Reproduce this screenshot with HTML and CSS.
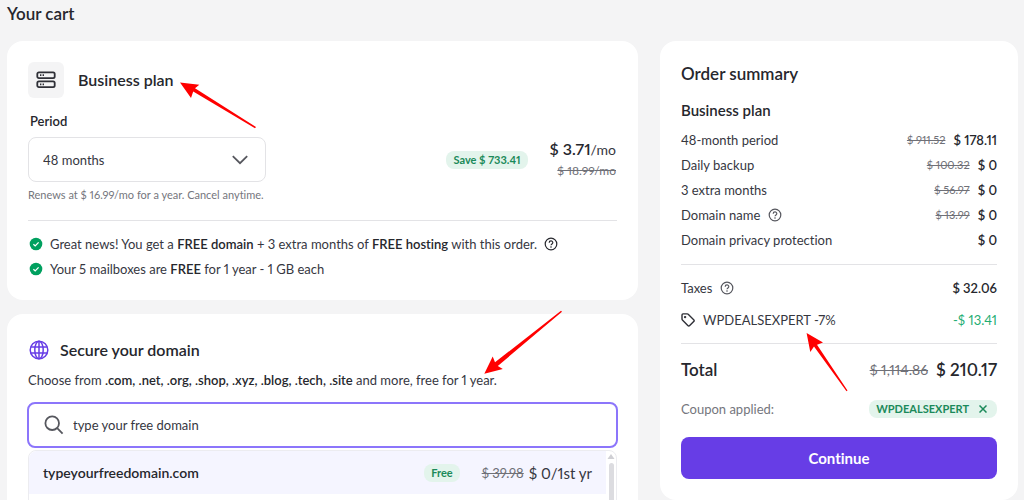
FILE: index.html
```html
<!DOCTYPE html>
<html lang="en">
<head>
    <meta charset="UTF-8">
    <meta name="viewport" content="width=device-width, initial-scale=1.0">
    <title>Your cart</title>
    <link rel="stylesheet" href="styles.css">
</head>
<body>

<!-- shared icons -->
<svg class="sprite" aria-hidden="true">
    <symbol id="icon-check" viewBox="0 0 14 14">
        <circle cx="7" cy="7" r="6.3" fill="#00a05f"/>
        <path d="M4.4 7.2l1.8 1.7 3.4-3.5" fill="none" stroke="#fff" stroke-width="1.3"/>
    </symbol>
    <symbol id="icon-help" viewBox="0 0 14 14">
        <g fill="none" stroke="currentColor" stroke-width="1.2">
            <circle cx="7" cy="7" r="5.8"/>
            <path d="M5.2 5.7c0-2.3 3.6-2.3 3.6-.1 0 1.3-1.7 1.3-1.8 2.7"/>
        </g>
        <circle cx="7" cy="10" r=".8" fill="currentColor"/>
    </symbol>
</svg>

<div class="page">
    <h1>Your cart</h1>

    <div class="cart">
        <main class="column">
            <section class="card plan">
                <div class="plan-header">
                    <span class="plan-icon">
                        <svg width="20" height="18" viewBox="0 0 20 18" fill="none" stroke="#2f3037" stroke-width="1.8">
                            <rect x="1.3" y="1.3" width="17.4" height="5.8" rx="1.6"/>
                            <rect x="1.3" y="10.4" width="17.4" height="5.8" rx="1.6"/>
                            <path d="M4 4.2h1.4M6.6 4.2h1.4M4 13.3h1.4M6.6 13.3h1.4"/>
                        </svg>
                    </span>
                    <h2>Business plan</h2>
                </div>

                <label class="period-label" for="period">Period</label>
                <div class="period-row">
                    <div class="select-box">
                        <select id="period">
                            <option>48 months</option>
                            <option>24 months</option>
                            <option>12 months</option>
                            <option>1 month</option>
                        </select>
                        <svg class="chevron" width="16" height="10" viewBox="0 0 16 10" fill="none" stroke="#56575e" stroke-width="1.8">
                            <path d="M.8 1.2L8 8.2l7.2-7"/>
                        </svg>
                    </div>
                    <span class="badge">Save $ 733.41</span>
                    <div class="price">
                        <div class="price-now"><strong>$ 3.71</strong>/mo</div>
                        <s class="price-old">$ 18.99<small>/mo</small></s>
                    </div>
                </div>
                <p class="renewal">Renews at $ 16.99/mo for a year. Cancel anytime.</p>

                <ul class="perks">
                    <li>
                        <svg width="14" height="14"><use href="#icon-check"/></svg>
                        <span>Great news! You get a <b>FREE domain</b> + 3 extra months of <b>FREE hosting</b> with this order.</span>
                        <svg class="help dark" width="14" height="14"><use href="#icon-help"/></svg>
                    </li>
                    <li>
                        <svg width="14" height="14"><use href="#icon-check"/></svg>
                        <span>Your 5 mailboxes are <b>FREE</b> for 1 year - 1 GB each</span>
                    </li>
                </ul>
            </section>

            <section class="card domain">
                <div class="domain-header">
                    <svg width="20" height="20" viewBox="0 0 20 20" fill="none" stroke="#673de6" stroke-width="1.5">
                        <circle cx="10" cy="10" r="8.8"/>
                        <ellipse cx="10" cy="10" rx="4.2" ry="8.8"/>
                        <path d="M10 1v18M1.8 7h16.4M1.8 13h16.4"/>
                    </svg>
                    <h2>Secure your domain</h2>
                </div>
                <p class="domain-text">Choose from <b>.com, .net, .org, .shop, .xyz, .blog, .tech, .site</b> and more, free for 1 year.</p>

                <div class="search">
                    <svg width="20" height="20" viewBox="0 0 20 20" fill="none" stroke="#56575e" stroke-width="1.8">
                        <circle cx="8.2" cy="8.2" r="6.8"/>
                        <path d="M13.2 13.2l5.4 5.4"/>
                    </svg>
                    <input type="text" aria-label="Domain name" value="type your free domain">
                </div>
                <div class="results">
                    <div class="results-list">
                        <div class="result active">
                            <b>typeyourfreedomain.com</b>
                            <span class="badge">Free</span>
                            <s>$ 39.98</s>
                            <span class="result-price">$ 0/1st yr</span>
                        </div>
                        <div class="result"></div>
                    </div>
                    <div class="scrollbar">
                        <svg width="8" height="5" viewBox="0 0 8 5" fill="#cfcfd4"><path d="M4 0l3.5 5h-7z"/></svg>
                        <span class="thumb"></span>
                    </div>
                </div>
            </section>
        </main>

        <aside class="card summary">
            <h2>Order summary</h2>
            <h3>Business plan</h3>
            <ul class="lines">
                <li>48-month period <span class="amount"><s>$ 911.52</s> <b>$ 178.11</b></span></li>
                <li>Daily backup <span class="amount"><s>$ 100.32</s> <b>$ 0</b></span></li>
                <li>3 extra months <span class="amount"><s>$ 56.97</s> <b>$ 0</b></span></li>
                <li>Domain name <svg class="help" width="14" height="14"><use href="#icon-help"/></svg> <span class="amount"><s>$ 13.99</s> <b>$ 0</b></span></li>
                <li>Domain privacy protection <span class="amount"><b>$ 0</b></span></li>
            </ul>
            <ul class="lines extras">
                <li>Taxes <svg class="help" width="14" height="14"><use href="#icon-help"/></svg> <span class="amount"><b>$ 32.06</b></span></li>
                <li>
                    <svg width="14" height="14" viewBox="0 0 14 14" fill="none" stroke="#2f3037" stroke-width="1.4">
                        <path d="M1 1.9v4.2c0 .4.1.7.4 1l5.4 5.5c.6.6 1.3.6 1.9 0l4-4c.6-.6.6-1.3 0-1.9L7.2 1.3C6.9 1 6.6.9 6.2.9H2C1.4.9 1 1.3 1 1.9z"/>
                        <circle cx="4.1" cy="4.1" r=".5" fill="#2f3037"/>
                    </svg>
                    <span>WPDEALSEXPERT -7%</span>
                    <span class="amount discount">-$ 13.41</span>
                </li>
            </ul>
            <div class="total">
                <strong>Total</strong>
                <s>$ 1,114.86</s>
                <strong>$ 210.17</strong>
            </div>
            <div class="coupon">
                Coupon applied:
                <span class="badge">WPDEALSEXPERT
                    <button type="button" class="remove" aria-label="Remove coupon">
                        <svg width="8" height="8" viewBox="0 0 8 8" stroke="currentColor" stroke-width="1.5"><path d="M.5.5l7 7M7.5.5l-7 7"/></svg>
                    </button>
                </span>
            </div>
            <button type="button" class="continue">Continue</button>
        </aside>
    </div>

    <!-- red pointers drawn over the cards -->
    <svg class="pointers" width="1024" height="500" viewBox="0 0 1024 500" fill="#f00" aria-hidden="true">
        <path d="M180 82.5L199.3 84.7 195 88.3 256 127 255 128.3 193.2 91.5 191 98z"/>
        <path d="M484.3 373.7L492.7 356.5 495 362.3 561 310.7 562 311.7 497.8 366 502.8 369z"/>
        <path d="M806.6 333L823 342.6 817 344.8 847.5 390.5 846.5 391.3 814 346.5 810.3 352z"/>
    </svg>
</div>

</body>
</html>
```

FILE: styles.css
```css
* {
    box-sizing: border-box;
}
body {
    margin: 0;
    background: #f4f4f5;
    color: #36373f;
    font-family: Lato, "Open Sans", sans-serif;
    font-size: 13px;
    font-variant-ligatures: none;
    font-variant-numeric: proportional-nums;
    line-height: 20px;
}
h1, h2, h3, p, ul {
    margin: 0;
    padding: 0;
}
h1, h2, h3, b, strong {
    color: #26272d;
    font-weight: 600;
}
h1 {
    font-size: 17px;
    line-height: 27px;
    margin-bottom: 14px;
}
h2 {
    font-size: 16px;
}
ul {
    list-style: none;
}
svg {
    flex: none;
}
s {
    color: #6f7077;
}
.sprite {
    display: none;
}
.page {
    position: relative;
    padding: 0 6px 0 7px;
}
.cart {
    display: grid;
    grid-template-columns: 631fr 358fr;
    gap: 22px;
    align-items: start;
}
.column {
    display: flex;
    flex-direction: column;
    gap: 14px;
}
.card {
    background: #fff;
    border-radius: 16px;
    padding: 21px;
}

/* plan */
.plan-header {
    display: flex;
    align-items: center;
    gap: 14px;
}
.plan-icon {
    display: flex;
    align-items: center;
    justify-content: center;
    width: 36px;
    height: 36px;
    border-radius: 6px;
    background: #f4f4f5;
}
.period-label {
    display: block;
    margin: 13px 0 6px 2px;
    color: #26272d;
    font-weight: 600;
}
.period-row {
    display: flex;
    align-items: center;
}
.select-box {
    position: relative;
    width: 238px;
    margin-right: auto;
}
select {
    width: 100%;
    height: 45px;
    padding: 0 14px;
    appearance: none;
    background: #fff;
    border: 1px solid #e3e3e6;
    border-radius: 8px;
    color: #36373f;
    font: inherit;
    font-variant-numeric: inherit;
}
.chevron {
    position: absolute;
    right: 18px;
    top: 18px;
    pointer-events: none;
}
.badge {
    padding: 0 7px;
    border-radius: 8px;
    background: #e3f4ec;
    color: #1b8a5a;
    font-size: 11px;
    font-weight: 700;
    line-height: 18px;
}
.price {
    margin: 0 1px 0 22px;
    text-align: right;
}
.price-now {
    font-size: 14px;
    line-height: 22px;
}
.price-now strong {
    font-size: 16px;
}
.price-old {
    display: block;
    font-size: 12px;
}
.price-old small {
    font-size: 12px;
}
.renewal {
    margin-top: 3px;
    color: #75767d;
    font-size: 11px;
}
.perks {
    display: grid;
    gap: 5px;
    margin-top: 15px;
    padding-top: 13px;
    border-top: 1px solid #e3e3e6;
}
.perks li {
    display: flex;
    align-items: center;
    gap: 7px;
    padding-left: 1px;
}
.help {
    color: #56575e;
}
.help.dark {
    color: #26272d;
}

/* domain */
.domain {
    padding: 26px 20px 22px;
}
.domain-header {
    display: flex;
    align-items: center;
    gap: 11px;
    padding-left: 2px;
}
.domain-text {
    margin: 10px 1px 12px;
}
.search {
    display: flex;
    align-items: center;
    gap: 8px;
    height: 46px;
    padding: 0 15px;
    border: 2px solid #8c75fb;
    border-radius: 8px;
}
.search input {
    flex: 1;
    min-width: 0;
    padding: 0 0 0 1px;
    border: 0;
    outline: 0;
    background: none;
    color: #36373f;
    font: inherit;
}
.results {
    display: flex;
    margin: 2px 1px 0;
    border: 1px solid #ececf0;
    border-radius: 8px;
}
.results-list {
    flex: 1;
}
.result {
    display: flex;
    align-items: center;
    height: 43px;
    padding: 0 14px;
}
.result.active {
    border-radius: 8px 0 0 0;
    background: #f5f5ff;
}
.result b {
    font-size: 14px;
}
.result .badge {
    margin-left: auto;
}
.result s {
    margin: 0 5px 0 22px;
}
.result-price {
    font-size: 15px;
}
.scrollbar {
    display: flex;
    flex-direction: column;
    align-items: center;
    gap: 4px;
    width: 10px;
    padding: 3px 0;
}
.thumb {
    flex: 1;
    width: 5px;
    border-radius: 3px;
    background: #dcdce0;
}

/* order summary */
.summary {
    padding-top: 23px;
}
.summary h2 {
    font-size: 17px;
}
.summary h3 {
    margin: 16px 0 10px;
    font-size: 15px;
}
.lines {
    display: grid;
    gap: 5px;
}
.lines li {
    display: flex;
    align-items: center;
    gap: 8px;
}
.amount {
    display: flex;
    align-items: center;
    gap: 8px;
    margin-left: auto;
}
.amount s {
    font-size: 11px;
}
.discount {
    color: #1fae73;
}
.extras {
    gap: 12px;
    margin: 14px 0;
    padding: 13px 0;
    border: solid #e3e3e6;
    border-width: 1px 0;
}
.total {
    display: flex;
    align-items: center;
    gap: 8px;
    margin-bottom: 17px;
    font-size: 14px;
    line-height: 24px;
}
.total strong {
    font-size: 17px;
}
.total s {
    margin-left: auto;
}
.coupon {
    display: flex;
    align-items: center;
    justify-content: space-between;
    color: #75767d;
}
.coupon .badge {
    display: flex;
    align-items: center;
    gap: 10px;
}
.remove {
    display: flex;
    padding: 0 3px 0 0;
    border: 0;
    background: none;
    color: inherit;
    cursor: pointer;
}
.continue {
    width: 100%;
    height: 42px;
    margin-top: 18px;
    border: 0;
    border-radius: 8px;
    background: #673de6;
    color: #fff;
    font: inherit;
    font-size: 15px;
    font-weight: 700;
    cursor: pointer;
}

.pointers {
    position: absolute;
    top: 0;
    left: 0;
    pointer-events: none;
}
```
